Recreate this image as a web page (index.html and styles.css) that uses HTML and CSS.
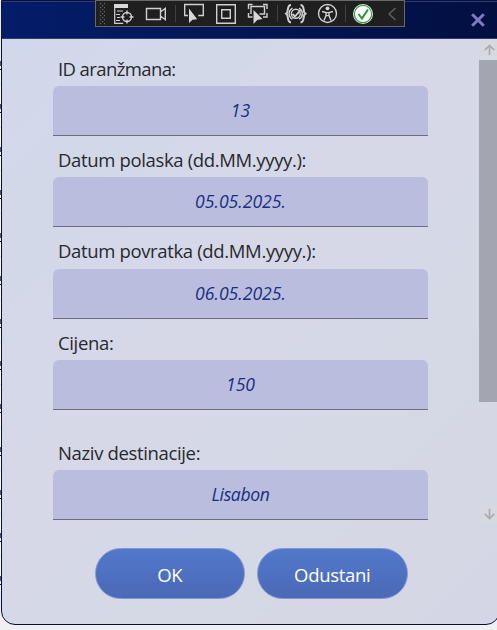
FILE: index.html
```html
<!DOCTYPE html>
<html lang="hr">
<head>
<meta charset="utf-8">
<title>Aranžman</title>
<link rel="stylesheet" href="styles.css">
</head>
<body>
<div class="backdrop"></div>
<main class="window">
  <header class="titlebar">
    <svg class="close" width="16" height="16" viewBox="0 0 16 16"><path d="M2.2 2.2 13.8 13.8M13.8 2.2 2.2 13.8"/></svg>
  </header>
  <div class="content">
    <form class="fields">
      <label class="field"><span class="label tight">ID aranžmana:</span><span class="value">13</span></label>
      <label class="field"><span class="label">Datum polaska (dd.MM.yyyy.):</span><span class="value">05.05.2025.</span></label>
      <label class="field"><span class="label">Datum povratka (dd.MM.yyyy.):</span><span class="value">06.05.2025.</span></label>
      <label class="field"><span class="label">Cijena:</span><span class="value">150</span></label>
      <label class="field spaced"><span class="label">Naziv destinacije:</span><span class="value name">Lisabon</span></label>
    </form>
    <div class="scrollbar">
      <svg class="arrow" width="20" height="21" viewBox="0 0 20 21"><path d="M10.500 16V7M5.800 11.200 10.500 6.500 15.200 11.200"/></svg>
      <div class="thumb"></div>
      <svg class="arrow" width="20" height="21" viewBox="0 0 20 21"><path d="M10.500 6V15M5.800 10.800 10.500 15.500 15.200 10.800"/></svg>
    </div>
  </div>
  <footer class="actions">
    <button class="button">OK</button>
    <button class="button">Odustani</button>
  </footer>
</main>
<div class="debugbar">
  <svg width="310" height="27" viewBox="0 0 310 27">
    <defs>
      <pattern id="grip" width="4" height="4" patternUnits="userSpaceOnUse" x="5" y="3"><path class="dot" d="M0 0h1.300v1.300H0zM2 2h1.300v1.300H2z"/></pattern>
    </defs>
    <rect x="4" y="3" width="6" height="22" fill="url(#grip)"/>
    <g class="line">
      <path class="solid" d="M19 4h14v4H19z"/>
      <path d="M19.700 8v15.300h8.500M22 11h6M21 14.500h4M22 17.500h3M21 20.500h4" stroke-width="1.200"/>
      <circle cx="32" cy="17" r="4.500"/><path d="M32 10.500v4M32 19.500v4M25.500 17h4M34.500 17h4"/>
      <path d="M51.500 8.500h14v11h-14zM65.500 12l4.800-3.700v11.400L65.500 16z"/>
      <path d="M93 15.500h-3.300v-11h18.600v11h-5"/><path class="solid" d="M94 8.500v14.500l3.500-3.200 4.700-.500z"/>
      <path d="M121.700 4.700h18.600v18.600h-18.600zM126.700 9.700h8.600v8.600h-8.600z"/>
      <path d="M153.500 9V4.500h4M168 4.500h4V9M153.500 13v4h4M172 13v4h-4M156 14V6.500h13.500V14h-5"/><path class="solid" d="M158.500 10v14l3.700-4 5.300-1z"/>
      <path d="M196 5c-4 0-2.500 5-4 7.800l-1 .9 1 .9c1.500 2.600 0 7.800 4 7.800M205.500 5c4 0 2.500 5 4 7.800l1 .9-1 .9c-1.500 2.600 0 7.800-4 7.800" stroke-width="2"/>
      <path d="M197.500 8.200c-4.500 2.500-4.500 8.500 0 11M204 8.200c4.500 2.500 4.500 8.500 0 11" stroke-width="1.500"/><circle cx="200.800" cy="13.700" r="4.500"/><path d="m197.500 14 2.500 2.500 5.500-6.300" stroke-width="1.800"/>
      <circle cx="232.500" cy="13.500" r="9"/><circle class="solid" cx="232.500" cy="8.300" r="1.900"/>
      <path d="M227 11.500l4 1.100v3l-2 5M238 11.500l-4 1.100v3l2 5M231 12.600h3M231 15.600h3"/>
    </g>
    <path class="divider" d="M80.500 5v17M182.500 5v17M250.500 5v17"/>
    <circle cx="268" cy="14" r="10" fill="#e8f3e8"/><circle cx="268" cy="14" r="8.600" fill="#fff" stroke="#3e9e45" stroke-width="1.200"/>
    <path d="m263.500 14 3.500 4.500 6-9" fill="none" stroke="#299332" stroke-width="2"/>
    <path class="chevron" d="m300.500 8-6.500 6 6.500 6"/>
  </svg>
</div>
</body>
</html>
```
FILE: styles.css
```css
* { box-sizing: border-box; }
body {
  margin: 0;
  width: 497px;
  height: 630px;
  overflow: hidden;
  position: relative;
  background: #f0f0f0;
  font-family: "Open Sans", "Noto Sans", sans-serif;
}
.backdrop {
  position: absolute;
  left: 0;
  top: 61px;
  width: 20px;
  height: 530px;
  background: repeating-linear-gradient(#55565c 0 5px, #f8f8fa 5px 8px, #15161b 8px 9px, #fff 9px 23px, #e4e4ec 23px 24px, #fff 24px 42.920px);
}
.window {
  position: relative;
  width: 499px;
  height: 625px;
  margin-left: 1px;
  border: 1px solid #021044;
  border-radius: 0 0 14px 14px;
  overflow: hidden;
  background: linear-gradient(135deg, #d2d8ec 0%, #d3d8e8 25%, #d6d8e8 45%, #d5d8e5 70%, #d5d6e5 100%);
}
.titlebar {
  display: flex;
  justify-content: flex-end;
  height: 38px;
  padding: 10px 13px 0 0;
  background: linear-gradient(90deg, #041d69, #031451 60%, #020f40);
  border-top: 1px solid #303c70;
  border-bottom: 1px solid #303b70;
}
.close { fill: none; stroke: #7b7bc4; stroke-width: 3; }
.content {
  display: flex;
  justify-content: space-between;
  height: 485px;
}
.fields { width: 375px; margin-left: 51px; padding-top: 5.500px; }
.field { display: block; height: 91.400px; }
.spaced { margin-top: 18.500px; }
.label {
  display: block;
  height: 41.500px;
  padding: 11px 0 0 5px;
  font-size: 18.500px;
  line-height: 26px;
  letter-spacing: -.35px;
  white-space: nowrap;
  color: #27292f;
}
.tight { letter-spacing: -.6px; }
.value {
  display: block;
  height: 50px;
  border-bottom: 1px solid #6d6d7e;
  border-radius: 6px 6px 0 0;
  background: #bbbddf;
  color: #17307f;
  font-size: 17.600px;
  font-style: italic;
  line-height: 49px;
  text-align: center;
}
.name { letter-spacing: -.4px; }
.scrollbar { display: flex; flex-direction: column; width: 20px; }
.arrow { background: #d8d8df; fill: none; stroke: #a9abb5; stroke-width: 1.700; flex: none; }
.thumb { height: 342px; margin-bottom: 101px; background: #a3a5b1; flex: none; }
.actions { display: flex; gap: 12px; padding: 24px 0 0 92.500px; }
.button {
  width: 150.500px;
  height: 51px;
  padding: 1px 0 0;
  border: 1px solid #7f96d2;
  border-radius: 26px;
  background: linear-gradient(#5278ca, #4b69b6);
  color: #fff;
  font: 18.500px "Open Sans", "Noto Sans", sans-serif;
  letter-spacing: -.3px;
}
.debugbar {
  position: absolute;
  left: 95px;
  top: 0;
  width: 310px;
  height: 27px;
  background: #1f1f1f;
  outline: 1px solid #686868;
  outline-offset: -1px;
}
.debugbar svg { display: block; }
.dot { fill: #666; }
.line { fill: none; stroke: #d0d0d0; stroke-width: 1.400; }
.solid { fill: #d8d8d8; stroke: none; }
.divider { stroke: #404040; }
.chevron { fill: none; stroke: #656565; stroke-width: 1.300; }
```
